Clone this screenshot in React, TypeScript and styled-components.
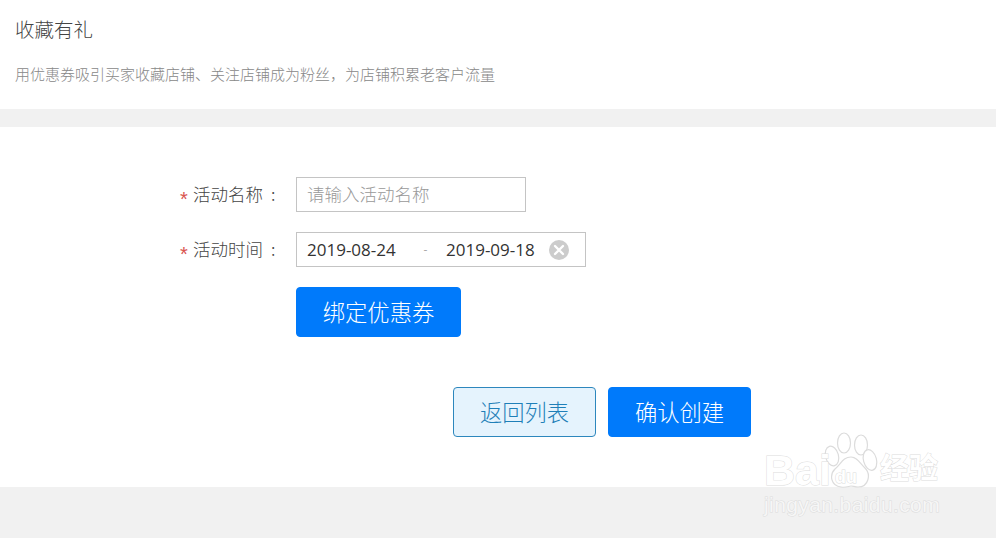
import React from 'react'
import styled, { createGlobalStyle } from 'styled-components'

const GlobalStyle = createGlobalStyle`
  html, body {
    margin: 0;
    padding: 0;
    background: #f1f1f1;
    font-family: "Liberation Sans", "Noto Sans CJK SC", sans-serif;
  }
`

const Page = styled.div`
  position: relative;
  width: 996px;
  height: 538px;
  overflow: hidden;
  background: #f1f1f1;
`

const Header = styled.header`
  height: 109px;
  box-sizing: border-box;
  padding: 16px 15px 0;
  background: #fff;
`

const Title = styled.h1`
  margin: 0;
  font-size: 19.5px;
  line-height: 26px;
  font-weight: 300;
  color: #444;
  font-family: "Noto Sans CJK SC", sans-serif;
`

const Subtitle = styled.p`
  margin: 19px 0 0;
  font-size: 15px;
  line-height: 26px;
  font-weight: 300;
  color: #888;
  font-family: "Noto Sans CJK SC", sans-serif;
`

const FormPanel = styled.section`
  margin-top: 18px;
  height: 360px;
  box-sizing: border-box;
  padding-top: 50px;
  background: #fff;
`

const Row = styled.div`
  display: flex;
  align-items: center;
  margin-bottom: 20px;
  padding-left: 180px;
`

const Star = styled.span`
  width: 13px;
  height: 35px;
  font-size: 20px;
  line-height: 44px;
  color: #d9534f;
  font-family: "Liberation Sans", sans-serif;
`

const Label = styled.label`
  display: flex;
  gap: 8px;
  width: 103px;
  font-size: 17.5px;
  line-height: 33px;
  height: 35px;
  font-weight: 300;
  color: #444;
  font-family: "Noto Sans CJK SC", sans-serif;
`

const NameInput = styled.input`
  width: 230px;
  height: 35px;
  box-sizing: border-box;
  padding: 0 11px 2px 10px;
  border: 1px solid #c4c4c4;
  outline: none;
  font-size: 17.5px;
  font-weight: 300;
  font-family: "Noto Sans CJK SC", sans-serif;
  &::placeholder {
    color: #999;
    opacity: 1;
  }
`

const DateRange = styled.div`
  display: flex;
  align-items: center;
  width: 290px;
  height: 35px;
  box-sizing: border-box;
  padding-left: 10px;
  border: 1px solid #c4c4c4;
  font-size: 17px;
  color: #333;
  font-family: "Open Sans", sans-serif;
`

const DateText = styled.span`
  width: 90px;
  white-space: nowrap;
`

const Dash = styled.span`
  width: 49px;
  box-sizing: border-box;
  padding-left: 8px;
  text-align: center;
  color: #aaa;
  font-size: 12px;
`

const ClearIcon = styled.svg`
  width: 20px;
  height: 20px;
  margin-left: 13px;
`

const Button = styled.button<{ $width: number; $ghost?: boolean }>`
  width: ${p => p.$width}px;
  height: 50px;
  padding: 0 0 3px;
  border-radius: 4px;
  border: 1px solid ${p => (p.$ghost ? '#2d87bd' : '#007afb')};
  background: ${p => (p.$ghost ? '#e5f3fd' : '#007afb')};
  color: ${p => (p.$ghost ? '#1f7fb8' : '#fff')};
  font-size: 22.3px;
  font-weight: 300;
  font-family: "Noto Sans CJK SC", sans-serif;
`

const BindRow = styled.div`
  padding-left: 296px;
`

const Actions = styled.div`
  display: flex;
  gap: 12px;
  margin-top: 50px;
  padding-left: 453px;
`

const Watermark = styled.div`
  position: absolute;
  left: 762px;
  top: 428px;
  width: 190px;
  height: 92px;
  pointer-events: none;
`

const MarkText = styled.span<{ $size: number; $left: number; $top: number }>`
  position: absolute;
  left: ${p => p.$left}px;
  top: ${p => p.$top}px;
  font-size: ${p => p.$size}px;
  line-height: 1;
  font-weight: 700;
  white-space: nowrap;
  color: #fff;
  -webkit-text-stroke: 1px #dcdcdc;
  paint-order: stroke fill;
  font-family: "Liberation Sans", "Noto Sans CJK SC", sans-serif;
`

const MarkUrl = styled(MarkText)`
  font-weight: 400;
  color: #f6f6f6;
  letter-spacing: 0.4px;
`

const Paw = styled.svg`
  position: absolute;
  left: 61px;
  top: 4px;
  width: 56px;
  height: 56px;
`

export default function App() {
  return (
    <Page>
      <GlobalStyle />
      <Header>
        <Title>收藏有礼</Title>
        <Subtitle>用优惠券吸引买家收藏店铺、关注店铺成为粉丝，为店铺积累老客户流量</Subtitle>
      </Header>
      <FormPanel>
        <Row>
          <Star>*</Star>
          <Label>活动名称<span>:</span></Label>
          <NameInput placeholder="请输入活动名称" />
        </Row>
        <Row>
          <Star>*</Star>
          <Label>活动时间<span>:</span></Label>
          <DateRange>
            <DateText>2019-08-24</DateText>
            <Dash>-</Dash>
            <DateText>2019-09-18</DateText>
            <ClearIcon viewBox="0 0 20 20">
              <circle cx="10" cy="10" r="10" fill="#ccc" />
              <path d="M6 6l8 8M14 6l-8 8" stroke="#fff" strokeWidth="2.4" strokeLinecap="round" />
            </ClearIcon>
          </DateRange>
        </Row>
        <BindRow>
          <Button $width={165}>绑定优惠券</Button>
        </BindRow>
        <Actions>
          <Button $width={143} $ghost>返回列表</Button>
          <Button $width={143}>确认创建</Button>
        </Actions>
      </FormPanel>
      <Watermark>
        <Paw viewBox="0 0 56 56" fill="#fff" stroke="#dcdcdc" strokeWidth="1.2">
          <ellipse cx="9" cy="24" rx="6.5" ry="10" transform="rotate(-15 9 24)" />
          <ellipse cx="21" cy="11" rx="6.5" ry="10" />
          <ellipse cx="38" cy="13" rx="6.5" ry="10" />
          <ellipse cx="47" cy="28" rx="6.5" ry="10.5" transform="rotate(-15 47 28)" />
          <path d="M28 25c6 0 9 6 14 11 6 6 4 19-7 19-3 0-5-1-7-1s-5 2-10 1c-10-1-12-12-6-18 6-5 8-12 16-12z" />
        </Paw>
        <MarkText $size={43} $left={2} $top={21}>Bai</MarkText>
        <MarkText $size={18} $left={73} $top={40}>du</MarkText>
        <MarkText $size={29} $left={118} $top={27}>经验</MarkText>
        <MarkUrl $size={21} $left={2} $top={66}>jingyan.baidu.com</MarkUrl>
      </Watermark>
    </Page>
  )
}
